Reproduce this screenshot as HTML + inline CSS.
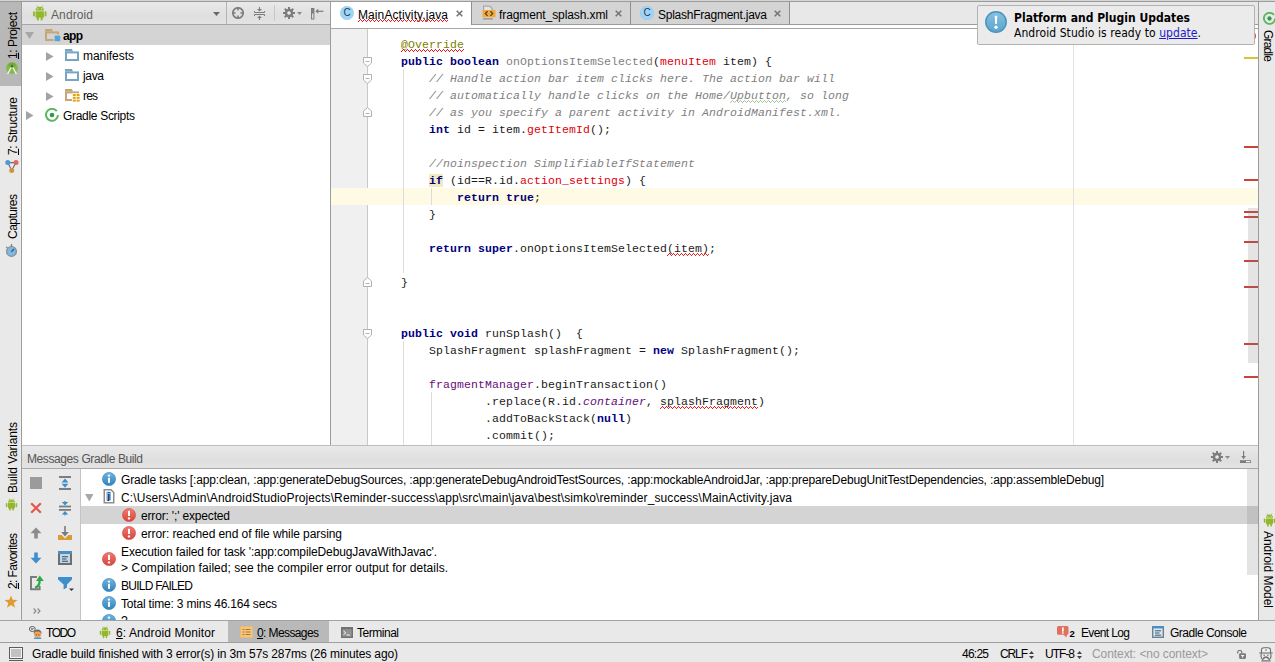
<!DOCTYPE html>
<html><head><meta charset="utf-8"><title>Android Studio</title>
<style>
*{box-sizing:border-box;margin:0;padding:0}
html,body{width:1275px;height:662px;overflow:hidden;background:#e8e8e8;font-family:"Liberation Sans",sans-serif;font-size:12px;color:#000}
.abs{position:absolute}
#root{position:relative;width:1275px;height:662px;overflow:hidden;background:#e8e8e8}
.t{position:absolute;white-space:pre;line-height:16px;height:16px}
.vt{position:absolute;white-space:pre;line-height:16px;height:16px;transform-origin:0 0;transform:rotate(-90deg)}
.vtr{position:absolute;white-space:pre;line-height:16px;height:16px;transform-origin:0 0;transform:rotate(90deg)}
.code{position:absolute;left:401px;white-space:pre;font-family:"Liberation Mono",monospace;font-size:11.5px;letter-spacing:0.1px;line-height:17px;height:17px;color:#1a1a1a}
.k{color:#000080;font-weight:bold}
.c{color:#808080;font-style:italic}
.e{color:#e0000a}
.g{color:#808080}
.f{color:#660e7a}
.fi{color:#660e7a;font-style:italic}
.an{color:#808000}
u{text-decoration:underline;text-underline-offset:1px}
</style></head><body><div id="root">
<svg class="abs" width="0" height="0" style="left:0;top:0"><defs><pattern id="wr" width="4" height="3" patternUnits="userSpaceOnUse"><path d="M0 2.5h1M1 1.5h1M2 .5h1M3 1.5h1" stroke="#f01818" stroke-width="1" shape-rendering="crispEdges"/></pattern><pattern id="wg" width="4" height="3" patternUnits="userSpaceOnUse"><path d="M0 2.5h1M1 1.5h1M2 .5h1M3 1.5h1" stroke="#a9c99a" stroke-width="1" shape-rendering="crispEdges"/></pattern><linearGradient id="ig" x1="0" y1="0" x2="0" y2="1"><stop offset="0" stop-color="#6fb4e0"/><stop offset="1" stop-color="#2f83bd"/></linearGradient><linearGradient id="eg" x1="0" y1="0" x2="0" y2="1"><stop offset="0" stop-color="#f07a70"/><stop offset="1" stop-color="#d9433b"/></linearGradient><linearGradient id="ng" x1="0" y1="0" x2="0" y2="1"><stop offset="0" stop-color="#86c2e2"/><stop offset="1" stop-color="#5aa3cd"/></linearGradient></defs></svg>
<div class="abs" style="left:0px;top:0px;width:1275px;height:1px;background:#d4d4d4;"></div>
<div class="abs" style="left:0px;top:1px;width:1275px;height:1px;background:#9c9c9c;"></div>
<div class="abs" style="left:0px;top:2px;width:22px;height:618px;background:#e9e9e9;"></div>
<div class="abs" style="left:0px;top:2px;width:21px;height:84px;background:#b8b8b8;"></div>
<div class="abs" style="left:20px;top:86px;width:1px;height:534px;background:#efefef;"></div>
<div class="abs" style="left:21px;top:2px;width:1px;height:618px;background:#9c9c9c;"></div>
<span class="vt" style="left:5px;top:59px;letter-spacing:-0.411px;"><u>1</u>: Project</span>
<svg class="abs" style="left:5.6px;top:62px;" width="12" height="13" viewBox="0 0 12 13"><circle cx="6" cy="6" r="6" fill="#86ba4c"/><path d="M6 0.6 A5.4 5.4 0 0 1 10.6 3.4 L6 6 L1.4 3.4 A5.4 5.4 0 0 1 6 0.6Z" fill="#6da03a" opacity="0.6"/><path d="M6 4 L1.6 12 M6 4 L10.4 12" fill="none" stroke="#f4f9ec" stroke-width="1.3"/><path d="M6 2.2 L7.3 4.2 L6 6.2 L4.7 4.2Z" fill="#3f6a2c"/></svg>
<span class="vt" style="left:5px;top:155px;letter-spacing:-0.366px;"><u>7</u>: Structure</span>
<svg class="abs" style="left:4.8px;top:159.8px;" width="14" height="13" viewBox="0 0 14 13"><path d="M2.8 2.6 H11 L6.7 10.4 Z" fill="none" stroke="#6a6a6a" stroke-width="1.1"/><circle cx="2.8" cy="2.6" r="2.5" fill="#4a9ad8"/><circle cx="11" cy="2.6" r="2.5" fill="#e0665e"/><circle cx="6.7" cy="10.4" r="2.5" fill="#cf9440"/></svg>
<span class="vt" style="left:5px;top:239px;letter-spacing:-0.529px;">Captures</span>
<svg class="abs" style="left:5px;top:243.8px;" width="13" height="13" viewBox="0 0 13 13"><circle cx="6.5" cy="7.4" r="4.9" fill="#7db9e2" stroke="#8c8c8c" stroke-width="1.2"/><rect x="5.8" y="0.2" width="1.4" height="2.2" fill="#7c7c7c"/><path d="M6.3 7.8 L9 5" stroke="#2c5f8c" stroke-width="1.4"/><path d="M1 2.6 L2.6 4" stroke="#8a8a8a" stroke-width="1.2"/></svg>
<span class="vt" style="left:5px;top:493px;letter-spacing:-0.166px;">Build Variants</span>
<svg class="abs" style="left:4.8px;top:498px" width="13" height="13" viewBox="0 0 14 15" preserveAspectRatio="none"><g fill="#93b82c"><path d="M3.2 5.2 A3.8 3.6 0 0 1 10.8 5.2 Z"/><rect x="3.2" y="5.8" width="7.6" height="6.2" rx="0.8"/><rect x="0.9" y="5.8" width="1.7" height="4.8" rx="0.85"/><rect x="11.4" y="5.8" width="1.7" height="4.8" rx="0.85"/><rect x="4.4" y="11" width="1.8" height="3.6" rx="0.9"/><rect x="7.8" y="11" width="1.8" height="3.6" rx="0.9"/></g><path d="M4.3 0.6 L5.4 2.4 M9.7 0.6 L8.6 2.4" stroke="#93b82c" stroke-width="0.7" fill="none"/><circle cx="5.3" cy="3.5" r="0.55" fill="#fff"/><circle cx="8.7" cy="3.5" r="0.55" fill="#fff"/></svg>
<span class="vt" style="left:5px;top:589px;letter-spacing:-0.609px;"><u>2</u>: Favorites</span>
<svg class="abs" style="left:4.3px;top:594.8px;" width="14" height="14" viewBox="0 0 14 14"><polygon points="7.00,0.40 8.70,4.85 13.47,5.10 9.76,8.10 11.00,12.70 7.00,10.10 3.00,12.70 4.24,8.10 0.53,5.10 5.30,4.85" fill="#e09a30"/></svg>
<div class="abs" style="left:22px;top:2px;width:308px;height:22px;background:linear-gradient(#e9e9e9,#dfdfdf 65%,#e3e3e3);"></div>
<div class="abs" style="left:22px;top:24px;width:308px;height:1px;background:#a4a4a4;"></div>
<div class="abs" style="left:22px;top:25px;width:308px;height:421px;background:#fff;"></div>
<div class="abs" style="left:22px;top:25px;width:308px;height:20px;background:#d4d4d4;"></div>
<div class="abs" style="left:330px;top:2px;width:1px;height:444px;background:#9c9c9c;"></div>
<svg class="abs" style="left:31.5px;top:4.5px" width="15.5" height="16" viewBox="0 0 14 15" preserveAspectRatio="none"><g fill="#93b82c"><path d="M3.2 5.2 A3.8 3.6 0 0 1 10.8 5.2 Z"/><rect x="3.2" y="5.8" width="7.6" height="6.2" rx="0.8"/><rect x="0.9" y="5.8" width="1.7" height="4.8" rx="0.85"/><rect x="11.4" y="5.8" width="1.7" height="4.8" rx="0.85"/><rect x="4.4" y="11" width="1.8" height="3.6" rx="0.9"/><rect x="7.8" y="11" width="1.8" height="3.6" rx="0.9"/></g><path d="M4.3 0.6 L5.4 2.4 M9.7 0.6 L8.6 2.4" stroke="#93b82c" stroke-width="0.7" fill="none"/><circle cx="5.3" cy="3.5" r="0.55" fill="#fff"/><circle cx="8.7" cy="3.5" r="0.55" fill="#fff"/></svg>
<span class="t" style="left:51px;top:7px;color:#5f5f5f;letter-spacing:0.104px;">Android</span>
<svg class="abs" style="left:213px;top:12px;" width="7" height="4" viewBox="0 0 7 4"><path d="M0 0 H7 L3.5 4 Z" fill="#6a6a6a"/></svg>
<div class="abs" style="left:226px;top:2px;width:1px;height:22px;background:#b4b4b4;"></div>
<svg class="abs" style="left:232px;top:7px;" width="12" height="12" viewBox="0 0 12 12"><circle cx="6" cy="6" r="5.2" fill="none" stroke="#7d7d7d" stroke-width="1.7"/><path d="M6 0.8 V3.6 M6 8.4 V11.2 M0.8 6 H3.6 M8.4 6 H11.2" stroke="#7d7d7d" stroke-width="1.6"/></svg>
<svg class="abs" style="left:254px;top:7px;" width="11" height="13" viewBox="0 0 11 13"><path d="M0.5 4 V5.5 H10.5 V4 M0.5 9 V7.5 H10.5 V9" fill="none" stroke="#7d7d7d" stroke-width="1"/><path d="M5.5 0 V3 M5.5 13 V10" stroke="#7d7d7d" stroke-width="1.1"/><path d="M3 2 H8 L5.5 4.6 Z M3 11 H8 L5.5 8.4 Z" fill="#7d7d7d"/></svg>
<div class="abs" style="left:274px;top:5px;width:1px;height:16px;background:#c8c8c8;"></div>
<svg class="abs" style="left:283px;top:7px;" width="12" height="12" viewBox="0 0 12 12"><rect x="5" y="0" width="2" height="3" fill="#7d7d7d" transform="rotate(0 6 6)"/><rect x="5" y="0" width="2" height="3" fill="#7d7d7d" transform="rotate(45 6 6)"/><rect x="5" y="0" width="2" height="3" fill="#7d7d7d" transform="rotate(90 6 6)"/><rect x="5" y="0" width="2" height="3" fill="#7d7d7d" transform="rotate(135 6 6)"/><rect x="5" y="0" width="2" height="3" fill="#7d7d7d" transform="rotate(180 6 6)"/><rect x="5" y="0" width="2" height="3" fill="#7d7d7d" transform="rotate(225 6 6)"/><rect x="5" y="0" width="2" height="3" fill="#7d7d7d" transform="rotate(270 6 6)"/><rect x="5" y="0" width="2" height="3" fill="#7d7d7d" transform="rotate(315 6 6)"/><circle cx="6" cy="6" r="4.3" fill="#7d7d7d"/><circle cx="6" cy="6" r="1.8" fill="#ececec"/></svg>
<svg class="abs" style="left:297px;top:12px;" width="5" height="3" viewBox="0 0 5 3"><path d="M0 0 H5 L2.5 3 Z" fill="#8a8a8a"/></svg>
<svg class="abs" style="left:311px;top:8px;" width="13" height="12" viewBox="0 0 13 12"><rect x="0.5" y="0.5" width="2.4" height="10.5" fill="#dcdcdc" stroke="#7d7d7d" stroke-width="1"/><rect x="0.5" y="0.5" width="2.4" height="5" fill="#7d7d7d"/><path d="M5 3.3 H12.5" stroke="#7d7d7d" stroke-width="1.2"/><path d="M4.3 3.3 L7.3 0.8 V5.8 Z" fill="#7d7d7d"/></svg>
<svg class="abs" style="left:25px;top:32px;" width="9" height="7" viewBox="0 0 9 7"><path d="M0 0 H9 L4.5 7 Z" fill="#a6a6a6"/></svg>
<svg class="abs" style="left:45px;top:29px;" width="16" height="13" viewBox="0 0 16 13"><path d="M0 0 H7 L8 2.6 H0 Z" fill="#c6a676"/><rect x="1" y="3.4" width="12" height="7.6" fill="none" stroke="#c6a676" stroke-width="2"/><rect x="8.6" y="5.6" width="7.4" height="7.4" fill="#d4d4d4"/><rect x="9.6" y="6.6" width="5.6" height="5.6" fill="#55a5d6"/></svg>
<span class="t" style="left:63px;top:28px;font-weight:bold;letter-spacing:-0.672px;">app</span>
<svg class="abs" style="left:46px;top:51.5px;" width="7.5" height="9" viewBox="0 0 7.5 9"><path d="M0 0 L7.5 4.5 L0 9 Z" fill="#a3a3a3"/></svg>
<svg class="abs" style="left:65px;top:49px;" width="16" height="13" viewBox="0 0 16 13"><path d="M0 0 H7 L8 2.6 H0 Z" fill="#77a6c2"/><rect x="1" y="3.4" width="12" height="7.6" fill="#fff" stroke="#77a6c2" stroke-width="2"/></svg>
<span class="t" style="left:83px;top:48px;letter-spacing:-0.045px;">manifests</span>
<svg class="abs" style="left:46px;top:71.5px;" width="7.5" height="9" viewBox="0 0 7.5 9"><path d="M0 0 L7.5 4.5 L0 9 Z" fill="#a3a3a3"/></svg>
<svg class="abs" style="left:65px;top:69px;" width="16" height="13" viewBox="0 0 16 13"><path d="M0 0 H7 L8 2.6 H0 Z" fill="#77a6c2"/><rect x="1" y="3.4" width="12" height="7.6" fill="#fff" stroke="#77a6c2" stroke-width="2"/></svg>
<span class="t" style="left:83px;top:68px;letter-spacing:-0.339px;">java</span>
<svg class="abs" style="left:46px;top:91.5px;" width="7.5" height="9" viewBox="0 0 7.5 9"><path d="M0 0 L7.5 4.5 L0 9 Z" fill="#a3a3a3"/></svg>
<svg class="abs" style="left:65px;top:89px;" width="16" height="13" viewBox="0 0 16 13"><path d="M0 0 H7 L8 2.6 H0 Z" fill="#c6a676"/><rect x="1" y="3.4" width="12" height="7.6" fill="none" stroke="#c6a676" stroke-width="2"/><rect x="7" y="4.4" width="9" height="8.6" fill="#fff"/><g fill="#e3a20e"><rect x="7.8" y="5" width="3" height="2"/><rect x="11.6" y="5" width="3" height="2"/><rect x="7.8" y="7.8" width="3" height="2"/><rect x="11.6" y="7.8" width="3" height="2"/><rect x="7.8" y="10.6" width="3" height="2"/><rect x="11.6" y="10.6" width="3" height="2"/></g></svg>
<span class="t" style="left:83px;top:88px;letter-spacing:-0.836px;">res</span>
<svg class="abs" style="left:26px;top:111.3px;" width="7.5" height="9" viewBox="0 0 7.5 9"><path d="M0 0 L7.5 4.5 L0 9 Z" fill="#a3a3a3"/></svg>
<svg class="abs" style="left:45px;top:108px;" width="14" height="14" viewBox="0 0 14 14"><path d="M11.8 3.2 A6 6 0 1 0 13 7" fill="none" stroke="#5cb85f" stroke-width="2"/><circle cx="7" cy="7" r="2.3" fill="#2f9a4a"/></svg>
<span class="t" style="left:63px;top:108px;letter-spacing:-0.31px;">Gradle Scripts</span>
<div class="abs" style="left:331px;top:2px;width:928px;height:22px;background:#e8e8e8;"></div>
<div class="abs" style="left:331px;top:24px;width:928px;height:1px;background:#9c9c9c;"></div>
<div class="abs" style="left:331px;top:25px;width:928px;height:3px;background:#fff;"></div>
<div class="abs" style="left:331px;top:28px;width:928px;height:1px;background:#a6a6a6;"></div>
<div class="abs" style="left:331px;top:2px;width:140px;height:26px;background:#fff;"></div>
<div class="abs" style="left:471px;top:2px;width:1px;height:23px;background:#8e8e8e;"></div>
<div class="abs" style="left:472px;top:2px;width:158px;height:22px;background:#d4d4d4;"></div>
<div class="abs" style="left:630px;top:2px;width:1px;height:23px;background:#8e8e8e;"></div>
<div class="abs" style="left:631px;top:2px;width:158px;height:22px;background:#d4d4d4;"></div>
<div class="abs" style="left:789px;top:2px;width:1px;height:23px;background:#8e8e8e;"></div>
<svg class="abs" style="left:340px;top:6px;" width="14" height="14" viewBox="0 0 14 14"><circle cx="7" cy="7" r="6.7" fill="#9ed5f6" stroke="#8cc4e8" stroke-width="0.5"/><text x="7" y="10.4" text-anchor="middle" font-family="Liberation Sans,sans-serif" font-size="10" fill="#1f3a56">C</text></svg>
<span class="t" style="left:358px;top:7px;letter-spacing:0.095px;">MainActivity.java</span>
<svg class="abs" style="left:358px;top:19px" width="90" height="3"><rect width="90" height="3" fill="url(#wr)"/></svg>
<svg class="abs" style="left:456px;top:10px;" width="7" height="7" viewBox="0 0 7 7"><path d="M0.7 0.7 L6.3 6.3 M6.3 0.7 L0.7 6.3" stroke="#767676" stroke-width="1.6"/></svg>
<svg class="abs" style="left:482px;top:5px;" width="14" height="15" viewBox="0 0 14 15"><path d="M1 0.5 H8 L11 3.5 V5 H1 Z" fill="#a8a8a8"/><path d="M2.2 1.8 H7.5 L9.6 4 V5 H2.2Z" fill="#e4e4e4"/><rect x="1" y="13" width="10" height="1.6" fill="#a0a0a0"/><rect x="0.5" y="5" width="13" height="7.2" fill="#f2a93b"/><path d="M5.6 6.3 L3.4 8.6 L5.6 10.9 M8.4 6.3 L10.6 8.6 L8.4 10.9" fill="none" stroke="#5a3d10" stroke-width="1.3"/></svg>
<span class="t" style="left:499px;top:7px;letter-spacing:-0.095px;">fragment_splash.xml</span>
<svg class="abs" style="left:615px;top:10px;" width="7" height="7" viewBox="0 0 7 7"><path d="M0.7 0.7 L6.3 6.3 M6.3 0.7 L0.7 6.3" stroke="#767676" stroke-width="1.6"/></svg>
<svg class="abs" style="left:640px;top:6px;" width="14" height="14" viewBox="0 0 14 14"><circle cx="7" cy="7" r="6.7" fill="#9ed5f6" stroke="#8cc4e8" stroke-width="0.5"/><text x="7" y="10.4" text-anchor="middle" font-family="Liberation Sans,sans-serif" font-size="10" fill="#1f3a56">C</text></svg>
<span class="t" style="left:658px;top:7px;letter-spacing:-0.244px;">SplashFragment.java</span>
<svg class="abs" style="left:774px;top:10px;" width="7" height="7" viewBox="0 0 7 7"><path d="M0.7 0.7 L6.3 6.3 M6.3 0.7 L0.7 6.3" stroke="#767676" stroke-width="1.6"/></svg>
<div class="abs" style="left:331px;top:29px;width:927px;height:417px;background:#fff;"></div>
<div class="abs" style="left:331px;top:29px;width:36px;height:417px;background:#f0f0f0;"></div>
<div class="abs" style="left:367px;top:29px;width:1px;height:417px;background:#c9c9c9;"></div>
<div class="abs" style="left:331px;top:188px;width:927px;height:17px;background:#fffae3;"></div>
<div class="abs" style="left:1073px;top:29px;width:1px;height:417px;background:#e2e2e2;"></div>
<div class="abs" style="left:403px;top:69px;width:1px;height:204px;background:#dcdcdc;"></div>
<div class="abs" style="left:431px;top:188px;width:1px;height:17px;background:#dcdcdc;"></div>
<div class="abs" style="left:403px;top:341px;width:1px;height:119px;background:#dcdcdc;"></div>
<div class="abs" style="left:431px;top:392px;width:1px;height:68px;background:#dcdcdc;"></div>
<svg class="abs" style="left:363px;top:57px;" width="9" height="10" viewBox="0 0 9 10"><path d="M0.5 0.5 H8.5 V6 L4.5 9.5 L0.5 6 Z" fill="#fff" stroke="#b2b2b2" stroke-width="1"/><path d="M2.5 4.5 H6.5" stroke="#b2b2b2" stroke-width="1"/></svg>
<svg class="abs" style="left:363px;top:74px;" width="9" height="10" viewBox="0 0 9 10"><path d="M0.5 0.5 H8.5 V6 L4.5 9.5 L0.5 6 Z" fill="#fff" stroke="#b2b2b2" stroke-width="1"/><path d="M2.5 4.5 H6.5" stroke="#b2b2b2" stroke-width="1"/></svg>
<svg class="abs" style="left:363px;top:106.5px;" width="9" height="10" viewBox="0 0 9 10"><path d="M0.5 9.5 H8.5 V4 L4.5 0.5 L0.5 4 Z" fill="#fff" stroke="#b2b2b2" stroke-width="1"/><path d="M2.5 6.5 H6.5" stroke="#b2b2b2" stroke-width="1"/></svg>
<svg class="abs" style="left:363px;top:276.5px;" width="9" height="10" viewBox="0 0 9 10"><path d="M0.5 9.5 H8.5 V4 L4.5 0.5 L0.5 4 Z" fill="#fff" stroke="#b2b2b2" stroke-width="1"/><path d="M2.5 6.5 H6.5" stroke="#b2b2b2" stroke-width="1"/></svg>
<svg class="abs" style="left:363px;top:329px;" width="9" height="10" viewBox="0 0 9 10"><path d="M0.5 0.5 H8.5 V6 L4.5 9.5 L0.5 6 Z" fill="#fff" stroke="#b2b2b2" stroke-width="1"/><path d="M2.5 4.5 H6.5" stroke="#b2b2b2" stroke-width="1"/></svg>
<div class="abs" style="left:331px;top:29px;width:927px;height:417px;overflow:hidden">
<div class="code" style="left:70px;top:7px"><span class="an">@Override</span></div>
<div class="code" style="left:70px;top:24px"><span class="k">public boolean</span> <span class="g">onOptionsItemSelected</span>(<span class="e">menuItem</span> item) {</div>
<div class="code" style="left:70px;top:41px">    <span class="c">// Handle action bar item clicks here. The action bar will</span></div>
<div class="code" style="left:70px;top:58px">    <span class="c">// automatically handle clicks on the Home/Upbutton, so long</span></div>
<div class="code" style="left:70px;top:75px">    <span class="c">// as you specify a parent activity in AndroidManifest.xml.</span></div>
<div class="code" style="left:70px;top:92px">    <span class="k">int</span> id = item.<span class="e">getItemId</span>();</div>
<div class="code" style="left:70px;top:126px">    <span class="c">//noinspection SimplifiableIfStatement</span></div>
<div class="code" style="left:70px;top:143px">    <span class="k" style="background:#f5e9c0">if</span> (id==R.id.<span class="e">action_settings</span>) {</div>
<div class="code" style="left:70px;top:160px">        <span class="k">return true</span>;</div>
<div class="code" style="left:70px;top:177px">    }</div>
<div class="code" style="left:70px;top:211px">    <span class="k">return super</span>.onOptionsItemSelected(item);</div>
<div class="code" style="left:70px;top:245px">}</div>
<div class="code" style="left:70px;top:296px"><span class="k">public void</span> runSplash()  {</div>
<div class="code" style="left:70px;top:313px">    SplashFragment splashFragment = <span class="k">new</span> SplashFragment();</div>
<div class="code" style="left:70px;top:347px">    <span class="f">fragmentManager</span>.beginTransaction()</div>
<div class="code" style="left:70px;top:364px">            .replace(R.id.<span class="fi">container</span>, splashFragment)</div>
<div class="code" style="left:70px;top:381px">            .addToBackStack(<span class="k">null</span>)</div>
<div class="code" style="left:70px;top:398px">            .commit();</div>
</div>
<svg class="abs" style="left:401px;top:49px" width="63" height="3"><rect width="63" height="3" fill="url(#wr)"/></svg>
<svg class="abs" style="left:730px;top:100px" width="56" height="3"><rect width="56" height="3" fill="url(#wg)"/></svg>
<svg class="abs" style="left:667px;top:253px" width="42" height="3"><rect width="42" height="3" fill="url(#wr)"/></svg>
<svg class="abs" style="left:660px;top:406px" width="98" height="3"><rect width="98" height="3" fill="url(#wr)"/></svg>
<div class="abs" style="left:1244px;top:57px;width:14px;height:2px;background:#d8c43c;"></div>
<div class="abs" style="left:1244px;top:146px;width:14px;height:2px;background:#c8453a;"></div>
<div class="abs" style="left:1244px;top:179px;width:14px;height:2px;background:#c8453a;"></div>
<div class="abs" style="left:1244px;top:211px;width:14px;height:2px;background:#c8453a;"></div>
<div class="abs" style="left:1244px;top:216px;width:14px;height:2px;background:#c8453a;"></div>
<div class="abs" style="left:1244px;top:241px;width:14px;height:2px;background:#c8453a;"></div>
<div class="abs" style="left:1244px;top:260px;width:14px;height:2px;background:#c8453a;"></div>
<div class="abs" style="left:1244px;top:286px;width:14px;height:2px;background:#c8453a;"></div>
<div class="abs" style="left:1244px;top:343px;width:14px;height:2px;background:#c8453a;"></div>
<div class="abs" style="left:1244px;top:376px;width:14px;height:2px;background:#c8453a;"></div>
<div class="abs" style="left:1248px;top:208px;width:10px;height:155px;background:rgba(120,120,120,0.2);"></div>
<svg class="abs" style="left:1248px;top:31.7px;" width="8" height="8" viewBox="0 0 8 8"><circle cx="4" cy="4" r="4" fill="#d9544e"/></svg>
<div class="abs" style="left:1258px;top:2px;width:1px;height:618px;background:#9c9c9c;"></div>
<div class="abs" style="left:1259px;top:2px;width:16px;height:618px;background:#e9e9e9;"></div>
<svg class="abs" style="left:1263px;top:12px;" width="13" height="13" viewBox="0 0 14 14"><path d="M11.8 3.2 A6 6 0 1 0 13 7" fill="none" stroke="#5cb85f" stroke-width="2"/><circle cx="7" cy="7" r="2.3" fill="#2f9a4a"/></svg>
<span class="vtr" style="left:1276px;top:30px;letter-spacing:-0.806px;">Gradle</span>
<svg class="abs" style="left:1263px;top:513px;" width="13" height="14" viewBox="0 0 14 15"><g fill="#93b82c"><path d="M3.2 5.2 A3.8 3.6 0 0 1 10.8 5.2 Z"/><rect x="3.2" y="5.8" width="7.6" height="6.2" rx="0.8"/><rect x="0.9" y="5.8" width="1.7" height="4.8" rx="0.85"/><rect x="11.4" y="5.8" width="1.7" height="4.8" rx="0.85"/><rect x="4.4" y="11" width="1.8" height="3.6" rx="0.9"/><rect x="7.8" y="11" width="1.8" height="3.6" rx="0.9"/></g><path d="M4.3 0.6 L5.4 2.4 M9.7 0.6 L8.6 2.4" stroke="#93b82c" stroke-width="0.7" fill="none"/><circle cx="5.3" cy="3.5" r="0.55" fill="#fff"/><circle cx="8.7" cy="3.5" r="0.55" fill="#fff"/></svg>
<span class="vtr" style="left:1276px;top:531px;letter-spacing:-0.033px;">Android Model</span>
<div class="abs" style="left:977px;top:5px;width:278px;height:40px;background:#ebebeb;border:1px solid #b2b2b2;border-radius:2px"></div>
<svg class="abs" style="left:985px;top:11px;" width="22" height="22" viewBox="0 0 22 22"><circle cx="11" cy="11" r="10.2" fill="url(#ng)" stroke="#4c92bd" stroke-width="1.5"/><path d="M9.7 5.6 Q11 3.6 12.3 5.6 L11.8 13 H10.2 Z" fill="#fff"/><circle cx="11" cy="16.3" r="1.7" fill="#fff"/></svg>
<span class="t" style="left:1014px;top:10px;font-weight:bold;font-family:'DejaVu Sans Condensed','DejaVu Sans',sans-serif;letter-spacing:0.017px;">Platform and Plugin Updates</span>
<span class="t" style="left:1014px;top:25px;font-family:'DejaVu Sans Condensed','DejaVu Sans',sans-serif;letter-spacing:0.065px;">Android Studio is ready to <span style="color:#1a1acc;text-decoration:underline">update</span>.</span>
<div class="abs" style="left:22px;top:445px;width:1236px;height:1px;background:#bdbdbd;"></div>
<div class="abs" style="left:22px;top:446px;width:1236px;height:22px;background:linear-gradient(#e9e9e9,#dfdfdf 65%,#e3e3e3);"></div>
<div class="abs" style="left:22px;top:468px;width:1236px;height:1px;background:#a8a8a8;"></div>
<span class="t" style="left:27px;top:451px;color:#555;letter-spacing:-0.403px;">Messages Gradle Build</span>
<svg class="abs" style="left:1211px;top:451px;" width="12" height="12" viewBox="0 0 12 12"><rect x="5" y="0" width="2" height="3" fill="#7d7d7d" transform="rotate(0 6 6)"/><rect x="5" y="0" width="2" height="3" fill="#7d7d7d" transform="rotate(45 6 6)"/><rect x="5" y="0" width="2" height="3" fill="#7d7d7d" transform="rotate(90 6 6)"/><rect x="5" y="0" width="2" height="3" fill="#7d7d7d" transform="rotate(135 6 6)"/><rect x="5" y="0" width="2" height="3" fill="#7d7d7d" transform="rotate(180 6 6)"/><rect x="5" y="0" width="2" height="3" fill="#7d7d7d" transform="rotate(225 6 6)"/><rect x="5" y="0" width="2" height="3" fill="#7d7d7d" transform="rotate(270 6 6)"/><rect x="5" y="0" width="2" height="3" fill="#7d7d7d" transform="rotate(315 6 6)"/><circle cx="6" cy="6" r="4.3" fill="#7d7d7d"/><circle cx="6" cy="6" r="1.8" fill="#ececec"/></svg>
<svg class="abs" style="left:1225px;top:456px;" width="5" height="3" viewBox="0 0 5 3"><path d="M0 0 H5 L2.5 3 Z" fill="#8a8a8a"/></svg>
<svg class="abs" style="left:1240px;top:451px;" width="12" height="12" viewBox="0 0 12 12"><rect x="0" y="9.2" width="11" height="2.8" fill="#7d7d7d"/><rect x="6" y="10" width="4.2" height="1.2" fill="#f4f4f4"/><path d="M3.6 0 V6" stroke="#7d7d7d" stroke-width="1.2"/><path d="M3.6 8.2 L1.2 5 H6 Z" fill="#7d7d7d"/></svg>
<div class="abs" style="left:22px;top:469px;width:58px;height:151px;background:#e9e9e9;"></div>
<div class="abs" style="left:80px;top:469px;width:1px;height:151px;background:#c4c4c4;"></div>
<div class="abs" style="left:81px;top:469px;width:1177px;height:151px;background:#fff;"></div>
<div class="abs" style="left:81px;top:506px;width:1177px;height:18px;background:#d4d4d4;"></div>
<div class="abs" style="left:1247px;top:469px;width:11px;height:106px;background:rgba(120,120,120,0.2);"></div>
<svg class="abs" style="left:30px;top:477px;" width="12" height="12" viewBox="0 0 12 12"><rect width="12" height="12" fill="#9b9b9b"/></svg>
<svg class="abs" style="left:59px;top:476px;" width="12" height="14" viewBox="0 0 12 14"><rect x="0" y="0" width="12" height="2" fill="#7d7d7d"/><rect x="0" y="12" width="12" height="2" fill="#7d7d7d"/><path d="M2.6 6.4 H9.4 L6 2.4 Z M2.6 7.8 H9.4 L6 11.8 Z" fill="#3d8fc9"/></svg>
<svg class="abs" style="left:30px;top:502px;" width="12" height="12" viewBox="0 0 12 12"><path d="M1.2 1.2 L10.8 10.8 M10.8 1.2 L1.2 10.8" stroke="#e0574f" stroke-width="2.2"/></svg>
<svg class="abs" style="left:59px;top:501px;" width="12" height="15" viewBox="0 0 12 15"><rect x="0" y="4.6" width="12" height="1.8" fill="#7d7d7d"/><rect x="0" y="8" width="12" height="1.8" fill="#7d7d7d"/><path d="M2.8 1 H9.2 L6 4.4 Z M2.8 13.4 H9.2 L6 10 Z" fill="#3d8fc9"/><path d="M6 0 V2 M6 14.4 V12" stroke="#3d8fc9" stroke-width="1.2"/></svg>
<svg class="abs" style="left:30px;top:527px;" width="12" height="12" viewBox="0 0 12 12"><path d="M6 0.5 L11.5 6.2 H7.8 V11.5 H4.2 V6.2 H0.5 Z" fill="#8c8c8c"/></svg>
<svg class="abs" style="left:58px;top:526px;" width="14" height="14" viewBox="0 0 14 14"><path d="M7 0 V7" stroke="#7a7a7a" stroke-width="1.6"/><path d="M7 10.6 L3.2 6 H10.8 Z" fill="#7a7a7a"/><path d="M0 9 H3.6 L7 12.4 L10.4 9 H14 V14 H0 Z" fill="#d99a3a"/></svg>
<svg class="abs" style="left:30px;top:552px;" width="12" height="12" viewBox="0 0 12 12"><path d="M6 11.5 L11.5 5.8 H7.8 V0.5 H4.2 V5.8 H0.5 Z" fill="#3e8fce"/></svg>
<svg class="abs" style="left:58px;top:551px;" width="14" height="14" viewBox="0 0 14 14"><rect x="1" y="1" width="12" height="12" fill="#bfd9ec" stroke="#6e6e6e" stroke-width="2"/><rect x="0" y="0" width="14" height="3" fill="#4c8ec2"/><path d="M4 5.8 H10 M4 8 H8.5 M4 10.2 H10" stroke="#3c4c5c" stroke-width="1.1"/></svg>
<svg class="abs" style="left:30px;top:576px;overflow:visible;" width="14" height="15" viewBox="0 0 14 15"><path d="M7 1 H1 V13.2 H9.6 V10" fill="none" stroke="#7c7c7c" stroke-width="2"/><path d="M5 11.6 C8.6 11 9.6 8 9.6 4.6" fill="none" stroke="#2fa84a" stroke-width="2.4"/><path d="M6 5 L9.8 -0.4 L13.8 5 Z" fill="#2fa84a"/></svg>
<svg class="abs" style="left:58px;top:577px;" width="16" height="14" viewBox="0 0 16 14"><path d="M0 0 H14 V2.6 L9 7.4 V10.6 L5.6 12.6 V7.4 L0 2.6 Z" fill="#3e8fce"/><path d="M11 11.4 H16 L13.5 14 Z" fill="#333"/></svg>
<svg class="abs" style="left:32.5px;top:608px;" width="8" height="6" viewBox="0 0 8 6"><path d="M0.6 0.5 L3 3 L0.6 5.5 M4.6 0.5 L7 3 L4.6 5.5" fill="none" stroke="#8a8a8a" stroke-width="1.2"/></svg>
<svg class="abs" style="left:102px;top:472px;" width="14" height="14" viewBox="0 0 14 14"><circle cx="7" cy="7" r="6.6" fill="url(#ig)" stroke="#3b86b8" stroke-width="0.6"/><rect x="6" y="5.8" width="2" height="5" fill="#fff"/><circle cx="7" cy="3.6" r="1.2" fill="#fff"/></svg>
<span class="t" style="left:121px;top:472px;letter-spacing:-0.148px;">Gradle tasks [:app:clean, :app:generateDebugSources, :app:generateDebugAndroidTestSources, :app:mockableAndroidJar, :app:prepareDebugUnitTestDependencies, :app:assembleDebug]</span>
<svg class="abs" style="left:84.5px;top:494.3px;" width="8.6" height="7.5" viewBox="0 0 8.6 7.5"><path d="M0 0 H8.6 L4.3 7.5 Z" fill="#a8a8a8"/></svg>
<svg class="abs" style="left:102.5px;top:489.3px;" width="12" height="15" viewBox="0 0 12 15"><path d="M1.25 0.75 H8 L10.75 3.5 V13.75 H1.25 Z" fill="#fff" stroke="#8e8e8e" stroke-width="1.5"/><rect x="3.4" y="2.8" width="4.6" height="8.6" fill="#7fb4e4"/><text x="5.8" y="10" text-anchor="middle" font-family="Liberation Sans,sans-serif" font-size="9" font-weight="bold" fill="#14244e">j</text></svg>
<span class="t" style="left:121px;top:490px;letter-spacing:0.1px;">C:\Users\Admin\AndroidStudioProjects\Reminder-success\app\src\main\java\best\simko\reminder_success\MainActivity.java</span>
<svg class="abs" style="left:122px;top:508px;" width="14" height="14" viewBox="0 0 14 14"><circle cx="7" cy="7" r="6.6" fill="url(#eg)" stroke="#d0504a" stroke-width="0.6"/><rect x="6" y="2.8" width="2" height="5.2" fill="#fff"/><circle cx="7" cy="10.4" r="1.2" fill="#fff"/></svg>
<span class="t" style="left:141px;top:508px;letter-spacing:-0.165px;">error: &#x27;;&#x27; expected</span>
<svg class="abs" style="left:122px;top:526px;" width="14" height="14" viewBox="0 0 14 14"><circle cx="7" cy="7" r="6.6" fill="url(#eg)" stroke="#d0504a" stroke-width="0.6"/><rect x="6" y="2.8" width="2" height="5.2" fill="#fff"/><circle cx="7" cy="10.4" r="1.2" fill="#fff"/></svg>
<span class="t" style="left:141px;top:526px;letter-spacing:-0.08px;">error: reached end of file while parsing</span>
<svg class="abs" style="left:102px;top:552px;" width="14" height="14" viewBox="0 0 14 14"><circle cx="7" cy="7" r="6.6" fill="url(#eg)" stroke="#d0504a" stroke-width="0.6"/><rect x="6" y="2.8" width="2" height="5.2" fill="#fff"/><circle cx="7" cy="10.4" r="1.2" fill="#fff"/></svg>
<span class="t" style="left:121px;top:544px;letter-spacing:-0.116px;">Execution failed for task &#x27;:app:compileDebugJavaWithJavac&#x27;.</span>
<span class="t" style="left:121px;top:560px;letter-spacing:0.04px;">&gt; Compilation failed; see the compiler error output for details.</span>
<svg class="abs" style="left:102px;top:578px;" width="14" height="14" viewBox="0 0 14 14"><circle cx="7" cy="7" r="6.6" fill="url(#ig)" stroke="#3b86b8" stroke-width="0.6"/><rect x="6" y="5.8" width="2" height="5" fill="#fff"/><circle cx="7" cy="3.6" r="1.2" fill="#fff"/></svg>
<span class="t" style="left:121px;top:578px;letter-spacing:-0.73px;">BUILD FAILED</span>
<svg class="abs" style="left:102px;top:596px;" width="14" height="14" viewBox="0 0 14 14"><circle cx="7" cy="7" r="6.6" fill="url(#ig)" stroke="#3b86b8" stroke-width="0.6"/><rect x="6" y="5.8" width="2" height="5" fill="#fff"/><circle cx="7" cy="3.6" r="1.2" fill="#fff"/></svg>
<span class="t" style="left:121px;top:596px;letter-spacing:-0.187px;">Total time: 3 mins 46.164 secs</span>
<div class="abs" style="left:81px;top:612px;width:1177px;height:8px;overflow:hidden"><svg class="abs" style="left:21px;top:2px;" width="14" height="14" viewBox="0 0 14 14"><circle cx="7" cy="7" r="6.6" fill="url(#ig)" stroke="#3b86b8" stroke-width="0.6"/><rect x="6" y="5.8" width="2" height="5" fill="#fff"/><circle cx="7" cy="3.6" r="1.2" fill="#fff"/></svg><span class="t" style="left:40px;top:1px">?</span></div>
<div class="abs" style="left:0px;top:620px;width:1275px;height:1px;background:#a2a2a2;"></div>
<div class="abs" style="left:0px;top:621px;width:1275px;height:21px;background:#e9e9e9;"></div>
<div class="abs" style="left:228px;top:621px;width:101px;height:21px;background:#b9b9b9;"></div>
<div class="abs" style="left:0px;top:642px;width:1275px;height:1px;background:#9e9e9e;"></div>
<svg class="abs" style="left:29px;top:626px;" width="13" height="13" viewBox="0 0 13 13"><path d="M4.6 7.6 C4.6 2 12.6 2 12.6 7.6 Z" fill="#6c6c6c"/><ellipse cx="8.6" cy="8.6" rx="3.6" ry="3.1" fill="#f2a550"/><circle cx="7.3" cy="8.8" r="0.6" fill="#5a3a1a"/><circle cx="9.9" cy="8.8" r="0.6" fill="#5a3a1a"/><path d="M5.2 11.4 H12 L12.4 13 H4.8 Z" fill="#3f9ad8"/><ellipse cx="3.3" cy="3" rx="2.9" ry="2.5" fill="#fff" stroke="#4a4a4a" stroke-width="0.9"/><path d="M1.8 2.4 H4.8 M1.8 3.7 H4.2" stroke="#4a4a4a" stroke-width="0.7"/></svg>
<span class="t" style="left:46px;top:625px;letter-spacing:-1.484px;">TODO</span>
<svg class="abs" style="left:99px;top:626px" width="12" height="12.5" viewBox="0 0 14 15" preserveAspectRatio="none"><g fill="#93b82c"><path d="M3.2 5.2 A3.8 3.6 0 0 1 10.8 5.2 Z"/><rect x="3.2" y="5.8" width="7.6" height="6.2" rx="0.8"/><rect x="0.9" y="5.8" width="1.7" height="4.8" rx="0.85"/><rect x="11.4" y="5.8" width="1.7" height="4.8" rx="0.85"/><rect x="4.4" y="11" width="1.8" height="3.6" rx="0.9"/><rect x="7.8" y="11" width="1.8" height="3.6" rx="0.9"/></g><path d="M4.3 0.6 L5.4 2.4 M9.7 0.6 L8.6 2.4" stroke="#93b82c" stroke-width="0.7" fill="none"/><circle cx="5.3" cy="3.5" r="0.55" fill="#fff"/><circle cx="8.7" cy="3.5" r="0.55" fill="#fff"/></svg>
<span class="t" style="left:116px;top:625px;letter-spacing:0.095px;"><u>6</u>: Android Monitor</span>
<svg class="abs" style="left:240px;top:626px;" width="13" height="12" viewBox="0 0 13 12"><rect x="0.5" y="0.5" width="12" height="11" fill="#f4c781" stroke="#eeb96a" stroke-width="1"/><path d="M2.5 3.5 H4.5 M5.5 3.5 H10.5 M2.5 6 H4.5 M5.5 6 H10.5 M2.5 8.5 H4.5 M5.5 8.5 H10.5" stroke="#a9772c" stroke-width="1"/></svg>
<span class="t" style="left:257px;top:625px;letter-spacing:-0.605px;"><u>0</u>: Messages</span>
<svg class="abs" style="left:341px;top:627px;" width="12" height="11" viewBox="0 0 12 11"><rect x="0.7" y="0.7" width="10.6" height="9.6" fill="#929292" stroke="#727272" stroke-width="1.4"/><rect x="0" y="0" width="12" height="2.2" fill="#727272"/><path d="M2.6 4 L4.8 5.8 L2.6 7.6" fill="none" stroke="#f4f4f4" stroke-width="1"/><path d="M5.6 8 H8.8" stroke="#f4f4f4" stroke-width="1"/></svg>
<span class="t" style="left:357px;top:625px;letter-spacing:-0.48px;">Terminal</span>
<svg class="abs" style="left:1057px;top:626px;" width="12" height="12" viewBox="0 0 12 12"><path d="M1.5 0 H10 A1.5 1.5 0 0 1 11.5 1.5 V7.2 A1.5 1.5 0 0 1 10 8.7 L9.4 11.4 L6.6 8.7 H1.5 A1.5 1.5 0 0 1 0 7.2 V1.5 A1.5 1.5 0 0 1 1.5 0 Z" fill="#e26f5f"/><rect x="5" y="1.4" width="1.7" height="4.2" fill="#fff"/><rect x="5" y="6.3" width="1.7" height="1.3" fill="#fff"/></svg>
<span class="t" style="left:1069.5px;top:626px;font-size:9.5px;font-weight:bold;letter-spacing:-0.297px;">2</span>
<span class="t" style="left:1081px;top:625px;letter-spacing:-0.631px;">Event Log</span>
<svg class="abs" style="left:1152px;top:626px;" width="12" height="12" viewBox="0 0 12 12"><rect x="0.7" y="0.7" width="10.6" height="10.6" fill="#d2e6f4" stroke="#6f7f8f" stroke-width="1.4"/><rect x="0" y="0" width="12" height="2.4" fill="#4c8ec2"/><path d="M3 4.8 H9 M3 7 H7.5 M3 9.2 H9" stroke="#44586c" stroke-width="1"/></svg>
<span class="t" style="left:1170px;top:625px;letter-spacing:-0.492px;">Gradle Console</span>
<div class="abs" style="left:0px;top:643px;width:1275px;height:19px;background:#e9e9e9;"></div>
<svg class="abs" style="left:9px;top:647px;" width="14" height="14" viewBox="0 0 14 14"><rect x="0.5" y="0.5" width="13" height="11" fill="#f6f6f6" stroke="#5c5c5c" stroke-width="1"/><rect x="2" y="2" width="10" height="8" fill="#c2c2c2"/><path d="M0 13.5 H14" stroke="#5a5a5a" stroke-width="1"/></svg>
<span class="t" style="left:32px;top:646px;letter-spacing:-0.128px;">Gradle build finished with 3 error(s) in 3m 57s 287ms (26 minutes ago)</span>
<span class="t" style="left:962px;top:646px;letter-spacing:-0.758px;">46:25</span>
<span class="t" style="left:1000px;top:646px;letter-spacing:-1.115px;">CRLF</span>
<svg class="abs" style="left:1029px;top:651px;" width="5" height="8" viewBox="0 0 5 8"><path d="M0 3 L2.5 0 L5 3 Z M0 5 L2.5 8 L5 5 Z" fill="#444"/></svg>
<span class="t" style="left:1045px;top:646px;letter-spacing:-1.0px;">UTF-8</span>
<svg class="abs" style="left:1077px;top:651px;" width="5" height="8" viewBox="0 0 5 8"><path d="M0 3 L2.5 0 L5 3 Z M0 5 L2.5 8 L5 5 Z" fill="#444"/></svg>
<span class="t" style="left:1092px;top:646px;color:#9a9a9a;letter-spacing:-0.071px;">Context: &lt;no context&gt;</span>
<svg class="abs" style="left:1237px;top:650px;" width="10" height="10" viewBox="0 0 10 10"><path d="M0.7 3.6 V2.4 A2.05 2.05 0 0 1 4.8 2.4 V3.6" fill="none" stroke="#7c7c7c" stroke-width="1.2"/><rect x="2.1" y="3.2" width="6.9" height="5.7" rx="1.1" fill="#7c7c7c"/><rect x="4.1" y="5" width="3" height="1.1" fill="#f2f2f2"/><rect x="5.1" y="5" width="1" height="2.7" fill="#f2f2f2"/></svg>
<svg class="abs" style="left:1258.5px;top:646.5px;" width="14" height="15" viewBox="0 0 14 15"><path d="M2.5 6 V3 Q2.5 0.8 5 0.8 H9 Q11.5 0.8 11.5 3 V6" fill="#f0f0f0" stroke="#6e6e6e" stroke-width="1.1"/><path d="M0.3 6 H13.7" stroke="#6e6e6e" stroke-width="1.1"/><path d="M7 2.2 V4" stroke="#6e6e6e" stroke-width="1"/><path d="M2.6 6.6 Q0.8 10 4 13.2 M11.4 6.6 Q13.2 10 10 13.2" fill="none" stroke="#6e6e6e" stroke-width="1.1"/><path d="M4.4 8.2 H6 M8 8.2 H9.6" stroke="#6e6e6e" stroke-width="1"/><path d="M4 12 Q7 8 10 12" fill="none" stroke="#6e6e6e" stroke-width="1.5"/><path d="M2.4 13.9 H11.6" stroke="#6e6e6e" stroke-width="1.2"/></svg>
</div></body></html>
